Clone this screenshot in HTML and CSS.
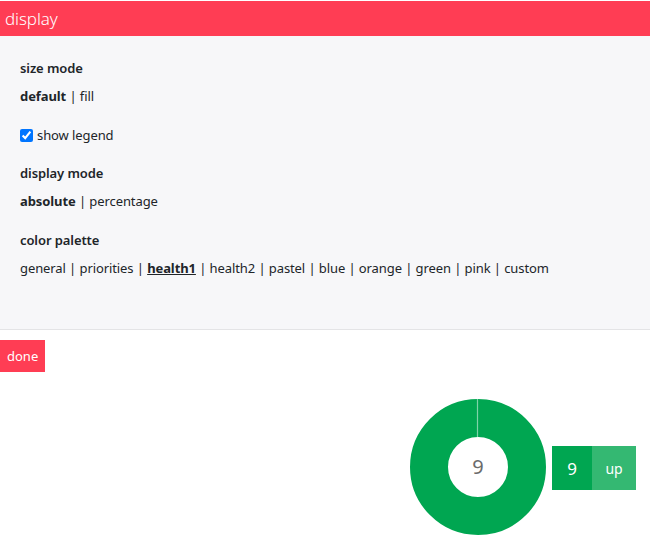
FILE: index.html
```html
<!DOCTYPE html>
<html>
<head>
<meta charset="utf-8">
<link rel="stylesheet" href="styles.css">
</head>
<body>
<div class="header">display</div>
<div class="panel">
  <div class="label">size mode</div>
  <div class="opts"><b>default</b> | fill</div>
  <label class="check"><input type="checkbox" checked> show legend</label>
  <div class="label">display mode</div>
  <div class="opts"><b>absolute</b> | percentage</div>
  <div class="label">color palette</div>
  <div class="opts">general | priorities | <b class="sel">health1</b> | health2 | pastel | blue | orange | green | pink | custom</div>
</div>
<div class="actions"><button class="done">done</button></div>
<div class="chart">
  <svg class="donut" width="136" height="136" viewBox="0 0 136 136">
    <circle cx="68" cy="68" r="49" fill="none" stroke="#00a651" stroke-width="38"/>
    <line x1="67.5" y1="0" x2="67.5" y2="38" stroke="#7fd3a8" stroke-width="1.2"/>
    <text x="68" y="75" text-anchor="middle" class="donut-num">9</text>
  </svg>
  <div class="legend">
    <div class="lg-val">9</div>
    <div class="lg-key">up</div>
  </div>
</div>
</body>
</html>
```
FILE: styles.css
```css
html, body {
  margin: 0;
  padding: 0;
  background: #ffffff;
  font-family: "Noto Sans", "Open Sans", sans-serif;
  font-size: 13px;
  letter-spacing: -0.09px;
  color: #212529;
}
.header {
  margin-top: 1px;
  height: 35px;
  background: #ff3d54;
  color: #ffffff;
  font-size: 17px;
  font-weight: 300;
  line-height: 35px;
  padding-left: 5px;
}
.panel {
  background: #f7f7f9;
  border-bottom: 1px solid #e4e4e6;
  padding: 22px 20px 51px 20px;
  display: flex;
  flex-direction: column;
  align-items: flex-start;
}
.label {
  font-weight: 600;
  line-height: 20px;
}
.opts {
  line-height: 20px;
  margin-top: 8px;
  margin-bottom: 19px;
}
.opts:last-child {
  margin-bottom: 0;
}
.opts b {
  font-weight: 700;
}
.sel {
  text-decoration: underline;
}
.check {
  line-height: 20px;
  display: flex;
  align-items: center;
  gap: 4px;
  margin-bottom: 18px;
}
.check input {
  margin: 0;
  width: 13px;
  height: 13px;
}
.actions {
  padding-top: 10px;
}
.done {
  border: none;
  background: #ff3d54;
  color: #ffffff;
  font-family: "Noto Sans", "Open Sans", sans-serif;
  font-size: 13px;
  height: 32px;
  padding: 0 7px;
  margin: 0;
}
.chart {
  display: flex;
  justify-content: flex-end;
  align-items: center;
  padding-top: 27px;
  padding-right: 14px;
  gap: 6px;
}
.donut-num {
  font-family: "Noto Sans", sans-serif;
  font-size: 20px;
  fill: #6b6b6b;
}
.legend {
  display: flex;
  height: 44px;
  margin-top: 2px;
}
.lg-val {
  width: 40px;
  background: #00a651;
  color: #ffffff;
  font-size: 17px;
  display: flex;
  align-items: center;
  justify-content: center;
}
.lg-key {
  width: 44px;
  background: #34b872;
  color: #ffffff;
  font-size: 14px;
  display: flex;
  align-items: center;
  justify-content: center;
}
```
